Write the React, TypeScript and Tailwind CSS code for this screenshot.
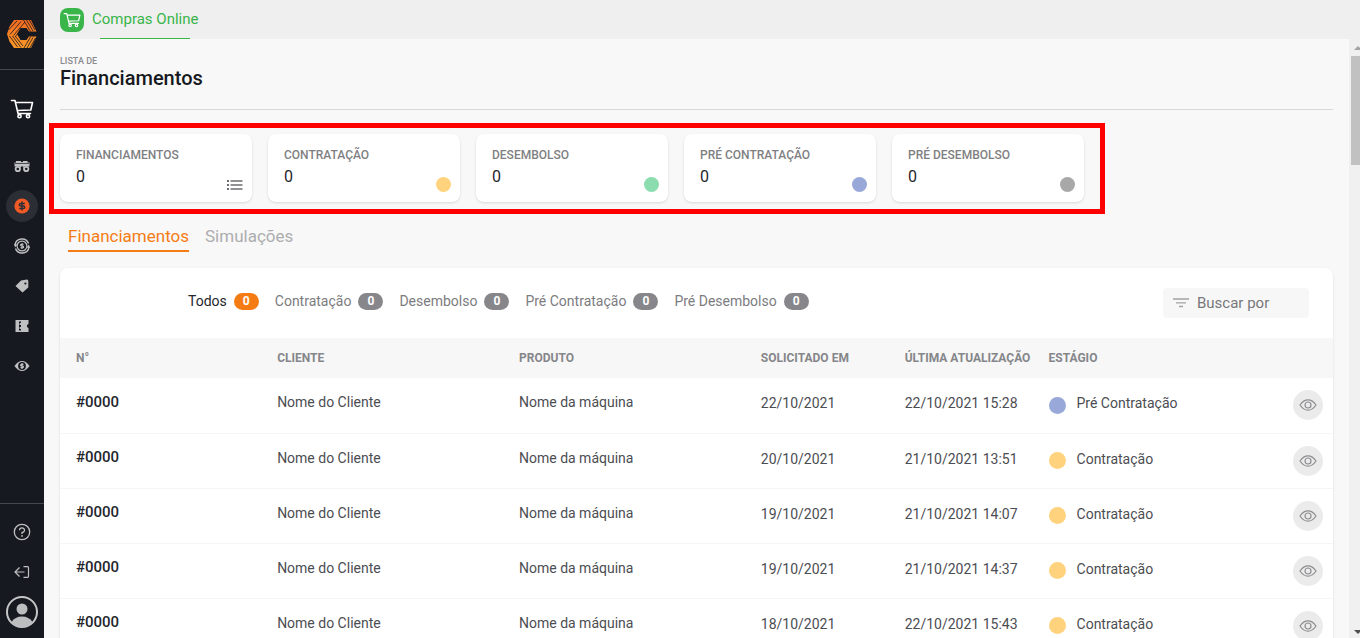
import type { ReactNode } from "react";

const CARDS = [
  { label: "FINANCIAMENTOS", value: 0, dot: null },
  { label: "CONTRATAÇÃO", value: 0, dot: "bg-[#ffd37d]" },
  { label: "DESEMBOLSO", value: 0, dot: "bg-[#8bdcae]" },
  { label: "PRÉ CONTRATAÇÃO", value: 0, dot: "bg-[#98a9d9]" },
  { label: "PRÉ DESEMBOLSO", value: 0, dot: "bg-[#a8a8a8]" },
];

const FILTERS = ["Todos", "Contratação", "Desembolso", "Pré Contratação", "Pré Desembolso"];

const ROWS = [
  { requested: "22/10/2021", updated: "22/10/2021 15:28", stage: "Pré Contratação" },
  { requested: "20/10/2021", updated: "21/10/2021 13:51", stage: "Contratação" },
  { requested: "19/10/2021", updated: "21/10/2021 14:07", stage: "Contratação" },
  { requested: "19/10/2021", updated: "21/10/2021 14:37", stage: "Contratação" },
  { requested: "18/10/2021", updated: "22/10/2021 15:43", stage: "Contratação" },
];

function Logo() {
  return (
    <svg width="30" height="28" viewBox="0 0 30 28" fill="none">
      <defs>
        <linearGradient id="logo" x1="0" y1="0" x2="0" y2="1">
          <stop offset="0" stopColor="#f36a21" />
          <stop offset="1" stopColor="#fb9a28" />
        </linearGradient>
      </defs>
      <path d="M7 0H24L29.500 11.500H22L19.500 8H13.500L10 14L13.500 20H19.500L22 16.500H29.500L24 28H7L2.500 21.500L0 14L2.500 6.500Z" fill="url(#logo)" />
      <path
        d="M14 1.500L3 14.500M18 2L6.500 15.500M10 1L1.500 10M12 12L8 17M2.500 16L10.500 27M5.500 16L14 27.500M8.500 16.500L16 26M16.500 0L23.500 11.500M19.500 0L26 11M22.300 0L28 10M17 28L23.500 17M20 28L26 17.500M22.800 28L28.500 18"
        stroke="#171920"
        strokeWidth=".8"
      />
    </svg>
  );
}

function CartIcon({ size }: { size: number }) {
  return (
    <svg width={size} height={size} viewBox="0 0 24 24" fill="none" stroke="currentColor" strokeWidth="1.600" strokeLinejoin="round" strokeLinecap="round">
      <path d="M1.500 3.500H5L8 16.500H20.500M5.600 5.500H22.500L20.800 13L7.300 13.500" />
      <circle cx="9.500" cy="19.200" r="1.600" />
      <circle cx="18" cy="19.200" r="1.600" />
    </svg>
  );
}

function TractorIcon() {
  return (
    <svg width="16" height="16" viewBox="0 0 16 16" fill="currentColor">
      <path d="M2 3H7V4H9V3H13.500V4.500H15.500V8.500H.5V4.500H2Z" />
      <path d="M1 5.500H15" stroke="#171920" strokeWidth=".7" />
      <g fill="none" stroke="currentColor" strokeWidth="1.800">
        <path d="M6.500 8L5 13.200M9.500 8L11.500 13.200" strokeWidth="1" />
        <circle cx="3.800" cy="11" r="2.200" />
        <circle cx="12.200" cy="11" r="2.200" />
      </g>
    </svg>
  );
}

function DollarIcon() {
  return (
    <svg width="16" height="16" viewBox="0 0 16 16" fill="none">
      <circle cx="8" cy="8" r="7.600" fill="#f15a24" />
      <path d="M10.800 5.500H7Q5.300 5.500 5.300 6.800T7 8H9Q10.700 8 10.700 9.300T9 10.500H5.200M8 3.600V12.400" stroke="#2c2e36" strokeWidth="1.500" />
    </svg>
  );
}

function RefreshDollarIcon() {
  return (
    <svg width="16" height="16" viewBox="0 0 16 16" fill="none" stroke="currentColor">
      <path d="M1 7A7 7 0 0 1 14.500 5.500M15 9A7 7 0 0 1 1.500 10.500" strokeWidth="1.500" />
      <circle cx="8" cy="8" r="4.900" strokeWidth="1.200" />
      <path d="M9.600 6.300H7.500Q6.500 6.300 6.500 7.100T7.500 8H8.600Q9.600 8 9.600 8.900T8.600 9.700H6.400M8 5V11" strokeWidth="1.100" />
      <path d="M0 6L1 9.500L3.500 6.500ZM16 10L15 6.500L12.500 9.500Z" fill="currentColor" stroke="none" />
    </svg>
  );
}

function TagIcon() {
  return (
    <svg width="14" height="14" viewBox="0 0 14 14" fill="currentColor">
      <path fillRule="evenodd" d="M.500 7L6 1.500L12 .500Q13.300 .700 13.300 2V8.500L7.500 13.500ZM9.300 4.500A1.100 1.100 0 1 0 11.500 4.500A1.100 1.100 0 1 0 9.300 4.500Z" />
    </svg>
  );
}

function TicketIcon() {
  return (
    <svg width="14" height="12" viewBox="0 0 14 12" fill="currentColor">
      <path d="M.500 0H4V12H.500ZM6 0H13.500V4Q11.800 4.400 11.800 6T13.500 8V12H6ZM4 0H6V1.500H4ZM4 10.500H6V12H4ZM4.600 3H6V5H4.600ZM4.600 7H6V9H4.600Z" />
    </svg>
  );
}

function EyeDollarIcon() {
  return (
    <svg width="16" height="12" viewBox="0 0 16 12" fill="none">
      <path d="M.500 6Q4 1 8 1T15.500 6Q12 11 8 11T.500 6Z" fill="currentColor" />
      <circle cx="8" cy="6" r="3.900" fill="#171920" />
      <path d="M9.500 4.400H7.600Q6.600 4.400 6.600 5.200T7.600 6H8.500Q9.500 6 9.500 6.800T8.500 7.600H6.500M8 3V9" stroke="currentColor" strokeWidth="1.200" />
    </svg>
  );
}

function HelpIcon() {
  return (
    <svg width="18" height="18" viewBox="0 0 18 18" fill="none" stroke="currentColor" strokeWidth="1.300">
      <circle cx="9" cy="9" r="7.700" />
      <path d="M6.500 7.200A2.500 2.300 0 1 1 9 9.400V11" />
      <circle cx="9" cy="12.900" r=".9" fill="currentColor" stroke="none" />
    </svg>
  );
}

function ExitIcon() {
  return (
    <svg width="16" height="12" viewBox="0 0 16 12" fill="none" stroke="currentColor" strokeWidth="1.200">
      <path d="M5.500 1.500L1 6L5.500 10.500M1 6H10.500M9.500 .700H13.500Q14.500 .700 14.500 1.700V10.300Q14.500 11.300 13.500 11.300H9.500" />
    </svg>
  );
}

function AvatarIcon() {
  return (
    <svg width="32" height="32" viewBox="0 0 32 32" fill="none">
      <circle cx="16" cy="16" r="15" stroke="#c5c6c8" strokeWidth="2" />
      <circle cx="16" cy="13" r="5.500" fill="#bcbdbf" />
      <path d="M5.500 26Q9 20.500 16 20.500T26.500 26Q22 31 16 31T5.500 26Z" fill="#bcbdbf" />
    </svg>
  );
}

function EyeIcon() {
  return (
    <svg width="18" height="12" viewBox="0 0 18 12" fill="none" stroke="#8d8d90" strokeWidth="1.200">
      <path d="M1 6Q4.500 .800 9 .800T17 6Q13.500 11.200 9 11.200T1 6Z" />
      <circle cx="9" cy="6" r="3" />
    </svg>
  );
}

function ListIcon() {
  return (
    <svg width="16" height="12" viewBox="0 0 16 12" fill="#6d6d72">
      <path d="M0 0H2V2H0ZM0 4H2V6H0ZM0 8H2V10H0ZM3.500 .300H15.500V1.700H3.500ZM3.500 4.300H15.500V5.700H3.500ZM3.500 8.300H15.500V9.700H3.500Z" />
    </svg>
  );
}

function FilterIcon() {
  return (
    <svg width="16" height="10" viewBox="0 0 16 10" className="shrink-0" fill="none" stroke="#a3a3a3" strokeWidth="1.300">
      <path d="M0 1H16M3 4.800H13M6 8.500H10" />
    </svg>
  );
}

function RailLink({ label, active, children }: { label: string; active?: boolean; children: ReactNode }) {
  return (
    <a
      href="#"
      aria-label={label}
      className={`flex size-8 items-center justify-center rounded-full text-[#bfc0c2] ${active ? "bg-[#2c2e36]" : ""}`}
    >
      {children}
    </a>
  );
}

function Rail() {
  return (
    <aside className="flex w-11 shrink-0 flex-col items-center bg-[#171920]">
      <a href="#" aria-label="Início" className="flex h-[70px] w-full items-center justify-center border-b border-[#46484e] pb-0.5">
        <Logo />
      </a>
      <a href="#" aria-label="Compras" className="mt-[27px] text-white">
        <CartIcon size={24} />
      </a>
      <nav className="mt-[29px] flex flex-col gap-2">
        <RailLink label="Máquinas"><TractorIcon /></RailLink>
        <RailLink label="Financiamentos" active><DollarIcon /></RailLink>
        <RailLink label="Consórcios"><RefreshDollarIcon /></RailLink>
        <RailLink label="Ofertas"><TagIcon /></RailLink>
        <RailLink label="Cupons"><TicketIcon /></RailLink>
        <RailLink label="Preços"><EyeDollarIcon /></RailLink>
      </nav>
      <div className="mt-auto flex w-full flex-col items-center gap-2 border-t border-[#46484e] pt-3 pb-2.5">
        <RailLink label="Ajuda"><HelpIcon /></RailLink>
        <RailLink label="Sair"><ExitIcon /></RailLink>
        <RailLink label="Perfil"><AvatarIcon /></RailLink>
      </div>
    </aside>
  );
}

function Card({ label, value, dot }: (typeof CARDS)[number]) {
  return (
    <div className="flex h-[68px] w-48 justify-between rounded-lg bg-white pt-3 pr-[9px] pb-2.5 pl-4 shadow-sm">
      <div>
        <h2 className="text-xs leading-[18px] font-medium text-[#7f7f83]">{label}</h2>
        <p className="text-base leading-[26px] text-[#24262d]">{value}</p>
      </div>
      <div className="self-end">
        {dot ? <span className={`block size-[15px] rounded-full ${dot}`} /> : <ListIcon />}
      </div>
    </div>
  );
}

function Listing() {
  return (
    <section className="mt-4 rounded-lg bg-white shadow-sm">
      <div className="flex h-[70px] items-center justify-between pr-6 pl-32">
        <div className="flex gap-4 pb-1">
          {FILTERS.map((name, i) => (
            <button key={name} type="button" className={`flex items-center gap-[7px] text-sm ${i === 0 ? "text-[#24262d]" : "text-[#7c7c80]"}`}>
              {name}
              <span className={`flex h-[17px] w-[25px] items-center justify-center rounded-full text-xs font-bold text-white ${i === 0 ? "bg-[#f57c14]" : "bg-[#87878b]"}`}>
                0
              </span>
            </button>
          ))}
        </div>
        <label className="flex h-[30px] w-[146px] items-center gap-2 rounded bg-[#f7f7f7] px-2.5">
          <FilterIcon />
          <input
            type="text"
            aria-label="Buscar por"
            placeholder="Buscar por"
            className="w-full min-w-0 text-[15px] outline-none placeholder:text-[#77777b]"
          />
        </label>
      </div>
      <table className="w-full table-fixed text-left text-sm text-[#4c4d52]">
        <colgroup>
          <col className="w-[15.8%]" />
          <col className="w-[19%]" />
          <col className="w-[19%]" />
          <col className="w-[11.3%]" />
          <col className="w-[11.3%]" />
          <col />
          <col className="w-14" />
        </colgroup>
        <thead className="bg-[#f7f7f7] text-xs whitespace-nowrap text-[#85868a]">
          <tr className="h-10">
            <th className="px-4">N°</th>
            <th className="px-4">CLIENTE</th>
            <th className="px-4">PRODUTO</th>
            <th className="px-4">SOLICITADO EM</th>
            <th className="pl-4">ÚLTIMA ATUALIZAÇÃO</th>
            <th className="px-4">ESTÁGIO</th>
            <th aria-label="Ações" />
          </tr>
        </thead>
        <tbody>
          {ROWS.map((row, i) => (
            <tr key={i} className="h-[55px] border-b border-[#f5f5f5] whitespace-nowrap">
              <td className="px-4 pb-1.5 text-[15px] font-medium text-[#24262d]">#0000</td>
              <td className="px-4 pb-1.5">Nome do Cliente</td>
              <td className="px-4 pb-1.5">Nome da máquina</td>
              <td className="px-4 pb-1">{row.requested}</td>
              <td className="px-4 pb-1">{row.updated}</td>
              <td className="px-4">
                <div className="flex items-center gap-[11px]">
                  <span className={`size-[17px] rounded-full ${row.stage === "Contratação" ? "bg-[#ffd37d]" : "bg-[#98a9d9]"}`} />
                  <span className="pb-1">{row.stage}</span>
                </div>
              </td>
              <td className="pl-4">
                <button type="button" aria-label="Visualizar" className="flex size-[30px] items-center justify-center rounded-full bg-[#ebebeb]">
                  <EyeIcon />
                </button>
              </td>
            </tr>
          ))}
        </tbody>
      </table>
    </section>
  );
}

function ScrollTrack() {
  return (
    <div aria-hidden="true" className="flex w-[11px] shrink-0 flex-col items-end justify-between overflow-hidden bg-[#f0f0f0] pt-[7px] pb-1">
      <div className="flex w-[9px] flex-col items-end gap-1.5">
        <svg width="6" height="4" viewBox="0 0 6 4"><path d="M0 4L4 0L8 4Z" fill="#a3a3a3" /></svg>
        <div className="h-[109px] w-full bg-[#c1c1c1]" />
      </div>
      <svg width="6" height="4" viewBox="0 0 6 4"><path d="M0 0L4 4L8 0Z" fill="#505050" /></svg>
    </div>
  );
}

export default function App() {
  return (
    <div className="flex h-screen overflow-hidden bg-[#f8f8f8] font-[Roboto,sans-serif]">
      <Rail />
      <div className="flex min-w-0 flex-1 flex-col">
        <header className="flex h-[39px] shrink-0 items-center gap-2 bg-[#efefef] px-4">
          <span className="flex size-6 items-center justify-center rounded-lg bg-[#39b54a] text-white">
            <CartIcon size={18} />
          </span>
          <a href="#" className="relative flex h-full items-center text-[15px] text-[#39b54a] after:absolute after:right-2 after:bottom-0 after:left-2 after:h-px after:bg-[#39b54a]">
            Compras Online
          </a>
        </header>
        <div className="flex min-h-0 flex-1">
          <main className="min-w-0 flex-1 overflow-hidden px-4">
            <div className="border-b border-[#d8d8d8] pt-4 pb-[19px]">
              <p className="text-[9px] leading-3 font-medium text-[#8b8b8f]">LISTA DE</p>
              <h1 className="text-xl leading-[23px] font-medium text-[#171920]">Financiamentos</h1>
            </div>
            <div className="mt-[13px] -ml-[11px] flex w-fit gap-4 border-[5px] border-[#ff0000] pt-1.5 pr-4 pb-[7px] pl-1.5">
              {CARDS.map((card) => (
                <Card key={card.label} {...card} />
              ))}
            </div>
            <nav className="mt-2 ml-2 flex gap-4 text-[17px] leading-7">
              <a href="#" className="border-b-2 border-[#f57c14] text-[#f57c14]">Financiamentos</a>
              <a href="#" className="text-[#adadaf]">Simulações</a>
            </nav>
            <Listing />
          </main>
          <ScrollTrack />
        </div>
      </div>
    </div>
  );
}
